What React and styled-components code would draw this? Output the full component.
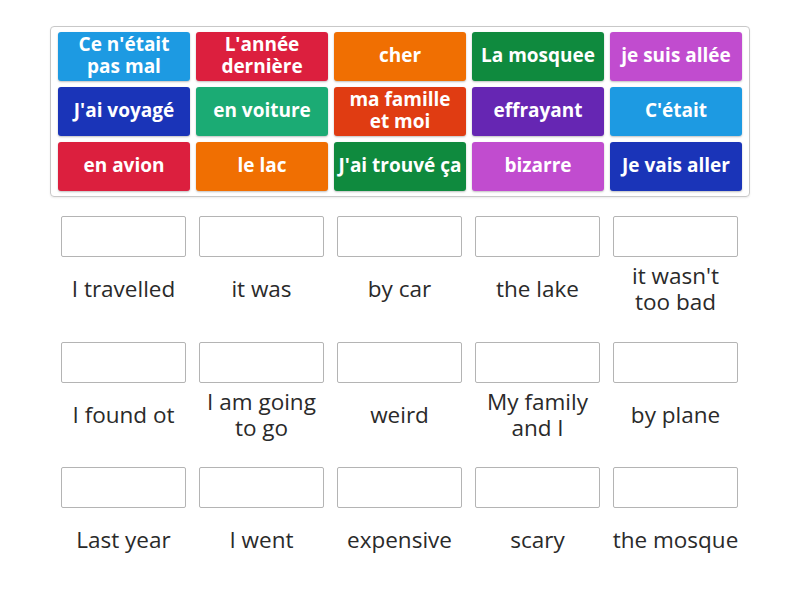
import React from 'react';
import styled, { createGlobalStyle } from 'styled-components';

const GlobalStyle = createGlobalStyle`
    body {
        margin: 0;
        background: #ffffff;
        font-family: "Open Sans", "Liberation Sans", sans-serif;
    }
`;

const Page = styled.div`
    width: 800px;
    height: 600px;
    padding-top: 26px;
    box-sizing: border-box;
`;

const Bank = styled.div`
    width: 700px;
    margin-left: 50px;
    box-sizing: border-box;
    border: 1px solid #c8c8c8;
    border-radius: 4px;
    padding: 5px 6px 5px 7px;
    display: grid;
    grid-template-columns: repeat(5, 132px);
    grid-auto-rows: 49px;
    gap: 6px;
    box-shadow: 0 1px 2px rgba(0, 0, 0, 0.08);
`;

const Tile = styled.div`
    background: ${(p) => p.color};
    border-radius: 3px;
    color: #ffffff;
    font-weight: 700;
    font-size: 19px;
    line-height: 22px;
    padding-bottom: 3px;
    box-sizing: border-box;
    display: flex;
    align-items: center;
    justify-content: center;
    text-align: center;
    box-shadow: 0 1px 2px rgba(0, 0, 0, 0.25);
    white-space: nowrap;
`;

const Targets = styled.div`
    margin-left: 61px;
    margin-top: 19px;
    display: grid;
    grid-template-columns: repeat(5, 125px);
    column-gap: 13px;
    row-gap: 19.5px;
`;

const Slot = styled.div`
    display: flex;
    flex-direction: column;
    align-items: center;
`;

const Box = styled.div`
    width: 125px;
    height: 41px;
    box-sizing: border-box;
    border: 1px solid #b4b4b4;
    border-radius: 2px;
    background: #fff;
`;

const Label = styled.div`
    width: 138px;
    height: 65px;
    box-sizing: border-box;
    padding-bottom: 1px;
    display: flex;
    align-items: center;
    justify-content: center;
    text-align: center;
    font-size: 22.5px;
    line-height: 26px;
    color: #2a2a2a;
    white-space: nowrap;
`;

const tiles = [
    ["Ce n'était\npas mal", '#1d9ae2'],
    ["L'année\ndernière", '#dc1f3e'],
    ['cher', '#f06f02'],
    ['La mosquee', '#0f8a3e'],
    ['je suis allée', '#c14ccf'],
    ["J'ai voyagé", '#1a34b8'],
    ['en voiture', '#1bab74'],
    ['ma famille\net moi', '#e03c12'],
    ['effrayant', '#6626b3'],
    ["C'était", '#1d9ae2'],
    ['en avion', '#dc1f3e'],
    ['le lac', '#f06f02'],
    ["J'ai trouvé ça", '#0f8a3e'],
    ['bizarre', '#c14ccf'],
    ['Je vais aller', '#1a34b8'],
];

const labels = [
    'I travelled', 'it was', 'by car', 'the lake', "it wasn't\ntoo bad",
    'I found ot', 'I am going\nto go', 'weird', 'My family\nand I', 'by plane',
    'Last year', 'I went', 'expensive', 'scary', 'the mosque',
];

const lines = (text) =>
    text.split('\n').map((t, i) => (
        <React.Fragment key={i}>
            {i > 0 && <br />}
            {t}
        </React.Fragment>
    ));

const App = () => {
    return (
        <Page>
            <GlobalStyle />
            <Bank>
                {tiles.map(([text, color]) => (
                    <Tile key={text} color={color}>{lines(text)}</Tile>
                ))}
            </Bank>
            <Targets>
                {labels.map((text) => (
                    <Slot key={text}>
                        <Box />
                        <Label>{lines(text)}</Label>
                    </Slot>
                ))}
            </Targets>
        </Page>
    );
};

export default App;
